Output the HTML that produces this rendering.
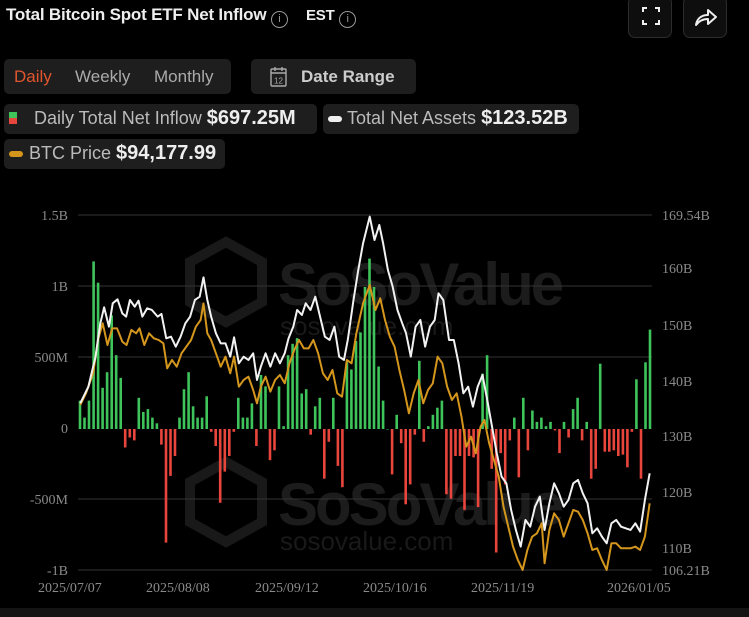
<!DOCTYPE html>
<html><head><meta charset="utf-8"><style>
*{margin:0;padding:0;box-sizing:border-box}
body{width:749px;height:617px;background:#000;overflow:hidden;font-family:"Liberation Sans",sans-serif;color:#ddd;position:relative}
.abs{position:absolute}
.box{position:absolute;background:#1e1e1e;border-radius:5px}
.title{left:6px;top:5px;font-size:17px;font-weight:bold;color:#eee;letter-spacing:-0.2px;white-space:nowrap}
.info{display:inline-block;width:17px;height:17px;border:1px solid #999;border-radius:50%;color:#999;font-size:11px;text-align:center;line-height:15px;vertical-align:-2px;font-weight:normal}
.btn{position:absolute;top:-4px;width:44px;height:42px;border:1px solid #2c2c2c;border-radius:7px;background:#0e0e0e}
.tab{font-size:17px;color:#aaa;position:absolute;top:67px}
.lg{font-size:18px;color:#bbb;position:absolute;white-space:nowrap}
.lg b{color:#eee;font-size:20px}
svg text{font-family:"Liberation Serif",serif;font-size:14px;fill:#8a8a8a}
</style></head><body>
<div class="abs title">Total Bitcoin Spot ETF Net Inflow <span class="info">i</span>&nbsp;&nbsp;&nbsp; <span style="font-size:15px;color:#eee">EST</span> <span class="info">i</span></div>
<div class="btn" style="left:628px"><svg width="44" height="42" viewBox="0 0 44 42"><path d="M14 15v-4h4M26 11h4v4M30 23v4h-4M18 27h-4v-4" stroke="#eee" stroke-width="2" fill="none"/></svg></div>
<div class="btn" style="left:683px"><svg width="44" height="42" viewBox="0 0 44 42"><path d="M12 28c1-7 6-10 12-10v-5l8 7-8 7v-5c-5 0-9 2-12 6z" stroke="#eee" stroke-width="2" fill="none" stroke-linejoin="round"/></svg></div>

<div class="box" style="left:4px;top:59px;width:227px;height:35px"></div>
<div class="tab" style="left:14px;color:#e0552e">Daily</div>
<div class="tab" style="left:75px">Weekly</div>
<div class="tab" style="left:154px">Monthly</div>
<div class="box" style="left:251px;top:59px;width:165px;height:35px"></div>
<svg class="abs" style="left:268px;top:65px" width="22" height="24" viewBox="0 0 22 24"><rect x="3" y="4" width="15" height="17" rx="1" stroke="#aaa" fill="none" stroke-width="1.4"/><path d="M3 8h15M7 2v4M14 2v4" stroke="#aaa" stroke-width="1.4"/><text x="10.5" y="18.5" text-anchor="middle" style="font-family:'Liberation Sans';font-size:8px;fill:#aaa">12</text></svg>
<div class="tab" style="left:301px;font-weight:bold;color:#ccc">Date Range</div>

<div class="box" style="left:4px;top:104px;width:313px;height:30px"></div>
<div class="abs" style="left:9px;top:112px;width:8px;height:6px;background:#3ec45a"></div>
<div class="abs" style="left:9px;top:118px;width:8px;height:6px;background:#e8453c"></div>
<div class="lg" style="left:34px;top:107px">Daily Total Net Inflow <b>$697.25M</b></div>
<div class="box" style="left:323px;top:104px;width:256px;height:30px"></div>
<div class="abs" style="left:328px;top:116px;width:14px;height:6px;border-radius:3px;background:#eee"></div>
<div class="lg" style="left:347px;top:107px">Total Net Assets <b>$123.52B</b></div>
<div class="box" style="left:4px;top:139px;width:221px;height:30px"></div>
<div class="abs" style="left:9px;top:151px;width:14px;height:6px;border-radius:3px;background:#d4961c"></div>
<div class="lg" style="left:29px;top:142px">BTC Price <b>$94,177.99</b></div>

<svg class="abs" style="left:0;top:0" width="749" height="617" viewBox="0 0 749 617">
<path d="M190 262l36 -20 36 20v40l-36 20-36-20z M190 482l36 -20 36 20v40l-36 20-36-20z" fill="none" stroke="#191919" stroke-width="10"/>
<text x="278" y="305" style="font-family:'Liberation Sans';font-weight:bold;font-size:60px;fill:#1c1c1c;letter-spacing:-3px">SoSoValue</text>
<text x="280" y="335" style="font-family:'Liberation Sans';font-size:26px;fill:#191919">sosovalue.com</text>
<text x="278" y="525" style="font-family:'Liberation Sans';font-weight:bold;font-size:60px;fill:#1c1c1c;letter-spacing:-3px">SoSoValue</text>
<text x="280" y="550" style="font-family:'Liberation Sans';font-size:26px;fill:#191919">sosovalue.com</text>
<g stroke="#333" stroke-width="1">
<line x1="78" y1="215" x2="652" y2="215"/><line x1="78" y1="286" x2="652" y2="286"/><line x1="78" y1="357" x2="652" y2="357"/><line x1="78" y1="499" x2="652" y2="499"/><line x1="78" y1="570" x2="652" y2="570"/>
</g>
<g text-anchor="end">
<text x="68" y="220">1.5B</text><text x="68" y="291">1B</text><text x="68" y="362">500M</text><text x="68" y="433">0</text><text x="68" y="504">-500M</text><text x="68" y="575">-1B</text>
</g>
<g>
<text x="662" y="220">169.54B</text><text x="662" y="273">160B</text><text x="662" y="330">150B</text><text x="662" y="386">140B</text><text x="662" y="441">130B</text><text x="662" y="497">120B</text><text x="662" y="553">110B</text><text x="662" y="575">106.21B</text>
</g>
<g style="font-size:15px">
<text x="38" y="592">2025/07/07</text><text x="146" y="592">2025/08/08</text><text x="255" y="592">2025/09/12</text><text x="363" y="592">2025/10/16</text><text x="471" y="592">2025/11/19</text><text x="607" y="592">2026/01/05</text>
</g>
<g id="bars"></g>
<g transform="translate(0,200) scale(0.4777,0.3333)" fill="none" stroke-width="2" stroke-linejoin="round">
<polyline stroke="#d4961c" vector-effect="non-scaling-stroke" points="168,615 180,580 195,520 205,420 215,370 225,435 235,385 245,385 256,425 265,435 275,390 285,400 292,385 302,435 312,400 322,415 332,420 342,430 350,505 360,480 370,500 380,460 390,440 400,420 410,380 420,360 426,310 434,400 442,420 452,460 462,500 472,470 482,520 490,470 500,560 510,540 520,530 530,570 538,610 546,560 556,530 566,575 576,540 586,525 596,550 606,490 616,450 626,420 636,445 646,445 656,420 666,460 676,520 686,540 696,510 706,580 716,590 726,480 736,490 746,400 760,310 774,255 786,330 796,295 806,360 816,410 826,440 836,510 846,570 856,640 866,580 876,540 886,610 896,570 906,550 916,470 926,490 936,560 946,600 956,580 966,650 976,740 986,710 996,760 1006,680 1014,660 1024,730 1034,780 1044,830 1054,920 1064,980 1074,1040 1084,1080 1094,1110 1104,1050 1114,1010 1124,1000 1134,970 1140,1090 1150,990 1160,940 1170,960 1180,1010 1190,970 1200,930 1210,935 1220,960 1230,1000 1240,1050 1250,1045 1260,1080 1270,1110 1280,1030 1290,1030 1300,1045 1310,1045 1320,1045 1330,1040 1340,1050 1350,1010 1360,910"/>
<polyline stroke="#f2f2f2" vector-effect="non-scaling-stroke" points="168,610 185,560 200,470 210,370 218,322 228,380 236,310 246,298 256,340 264,350 272,300 282,320 290,302 298,350 308,325 318,330 330,350 338,342 348,415 358,410 368,440 378,410 388,370 398,350 408,300 418,290 426,232 434,300 442,350 452,400 462,430 472,430 482,470 490,412 500,490 510,470 520,480 530,460 538,540 546,500 556,460 566,500 576,460 586,490 596,460 604,415 614,380 622,330 632,345 640,310 650,330 660,290 670,350 680,410 690,420 700,380 710,470 720,480 728,420 740,300 750,210 760,130 774,50 784,120 794,75 802,130 812,210 822,260 832,330 842,370 850,400 860,470 870,380 880,360 890,440 900,380 910,360 918,280 928,300 940,420 950,420 960,490 970,580 980,560 990,620 1000,560 1010,525 1020,600 1030,680 1040,760 1050,830 1060,850 1070,930 1080,990 1090,1040 1100,960 1110,980 1120,920 1130,890 1140,990 1150,910 1160,850 1170,880 1180,920 1190,900 1200,850 1210,840 1220,880 1230,910 1240,1000 1250,985 1260,1010 1270,1030 1280,970 1290,960 1300,980 1310,985 1320,990 1330,970 1340,995 1350,900 1360,820"/>
</g>
</svg>
<div class="abs" style="left:0;top:608px;width:749px;height:9px;background:#141414"></div>
<script>
var v=[200,80,200,1180,1030,290,400,800,520,360,-130,-60,-80,220,120,140,80,40,-110,-800,-330,-190,80,280,400,160,80,80,230,-20,-120,-520,-300,-190,-20,220,80,80,180,-120,380,300,-220,-150,300,20,520,600,640,250,280,-40,160,220,-350,-90,220,-260,-410,470,420,620,680,1000,1200,1000,440,200,0,-320,100,-100,-530,-390,-40,480,-90,20,100,150,200,-460,-490,-190,-190,-570,-190,-200,-550,390,520,-280,-870,-170,-390,-80,80,-340,220,-150,130,50,80,20,50,-10,-170,50,-60,140,220,-80,50,-350,-280,460,-160,-160,-150,-190,-180,-270,-20,350,-350,470,700];
var n=v.length,s='',x0=80,x1=650;
for(var i=0;i<n;i++){var x=x0+(x1-x0)*i/(n-1),h=v[i]*0.142;
s+='<rect x="'+(x-1.3).toFixed(1)+'" y="'+(h>0?429-h:429).toFixed(1)+'" width="2.6" height="'+Math.max(Math.abs(h),0.5).toFixed(1)+'" fill="'+(h>=0?'#3ec45a':'#e8453c')+'"/>';}
document.getElementById('bars').innerHTML=s;
</script>
</body></html>
